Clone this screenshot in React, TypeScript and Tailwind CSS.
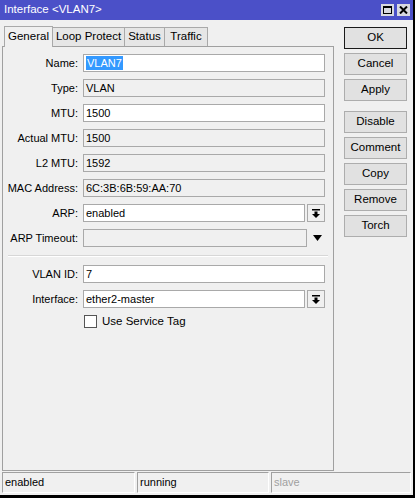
const font = { fontFamily: '"Liberation Sans", Arial, sans-serif' }

function DropIcon() {
  return (
    <svg width="8" height="9" viewBox="0 0 8 9">
      <rect x="0" y="0" width="8" height="1.5" fill="#000" />
      <rect x="2.5" y="2.5" width="3" height="2.5" fill="#000" />
      <path d="M0 5 L8 5 L4 9 Z" fill="#000" />
    </svg>
  )
}

function Row({ label, children }: { label: string; children: React.ReactNode }) {
  return (
    <div className="flex items-center h-[18px]">
      <div className="w-[75px] text-right pr-0 text-black">{label}</div>
      <div className="ml-[5px] flex items-center">{children}</div>
    </div>
  )
}

function Field({ value, editable, w = 242 }: { value: string; editable?: boolean; w?: number }) {
  return (
    <div
      className={`h-[18px] border border-[#a9a9a9] flex items-center pl-[2px] ${editable ? 'bg-white' : 'bg-[#f0f0f0]'}`}
      style={{ width: w }}
    >
      {value}
    </div>
  )
}

export default function App() {
  const buttons1 = ['OK', 'Cancel', 'Apply']
  const buttons2 = ['Disable', 'Comment', 'Copy', 'Remove', 'Torch']

  return (
    <div className="w-[415px] h-[498px] bg-[#f0f0f0] text-[11px] text-black flex flex-col border-r-[2px] border-b-[3px] border-black overflow-hidden" style={font}>
      {/* title bar */}
      <div className="h-[20px] bg-[#4b50c8] flex items-center justify-between pl-[4px] pr-[5px] mr-[-2px] shrink-0">
        <span className="text-white text-[11.5px]">Interface &lt;VLAN7&gt;</span>
        <div className="flex gap-[3px] items-center">
          <div className="w-[13px] h-[12px] bg-[#d8d8e0] flex items-center justify-center">
            <div className="w-[9px] h-[8px] border border-black border-t-2" />
          </div>
          <div className="w-[13px] h-[12px] bg-[#d8d8e0] flex items-center justify-center">
            <svg width="9" height="8" viewBox="0 0 9 8">
              <path d="M1 0.5 L8 7.5 M8 0.5 L1 7.5" stroke="#000" strokeWidth="2" />
            </svg>
          </div>
        </div>
      </div>

      <div className="flex flex-1 min-h-0">
        {/* left: tabs + panel */}
        <div className="ml-[2px] w-[332px] flex flex-col">
          <div className="h-[26px] flex items-end pl-[2px]">
            <div className="h-[21px] w-[49px] border border-b-0 border-[#a9a9a9] bg-[#f0f0f0] flex items-center justify-center text-[11.5px] relative top-[1px]">
              General
            </div>
            <div className="h-[19px] w-[72px] border border-l-0 border-b-0 border-[#a9a9a9] bg-[#e6e6e6] flex items-center justify-center text-[11.5px]">
              Loop Protect
            </div>
            <div className="h-[19px] w-[40px] border border-l-0 border-b-0 border-[#a9a9a9] bg-[#e6e6e6] flex items-center justify-center text-[11.5px]">
              Status
            </div>
            <div className="h-[19px] w-[43px] border border-l-0 border-b-0 border-[#a9a9a9] bg-[#e6e6e6] flex items-center justify-center text-[11.5px]">
              Traffic
            </div>
          </div>
          <div className="h-[425px] border border-[#a0a0a0] flex flex-col pt-[7px] gap-[7px]">
            <Row label="Name:">
              <div className="h-[18px] w-[242px] border border-[#a9a9a9] bg-white flex items-center pl-[2px]">
                <span className="bg-[#3399ff] text-white px-[1px] leading-[14px]">VLAN7</span>
              </div>
            </Row>
            <Row label="Type:"><Field value="VLAN" /></Row>
            <Row label="MTU:"><Field value="1500" editable /></Row>
            <Row label="Actual MTU:"><Field value="1500" /></Row>
            <Row label="L2 MTU:"><Field value="1592" /></Row>
            <Row label="MAC Address:"><Field value="6C:3B:6B:59:AA:70" /></Row>
            <Row label="ARP:">
              <Field value="enabled" editable w={222} />
              <div className="ml-[2px] w-[18px] h-[18px] border border-[#a9a9a9] bg-[#f0f0f0] flex items-center justify-center">
                <DropIcon />
              </div>
            </Row>
            <Row label="ARP Timeout:">
              <Field value="" w={224} />
              <svg className="ml-[6px]" width="9" height="6" viewBox="0 0 9 6">
                <path d="M0 0 L9 0 L4.5 6 Z" fill="#000" />
              </svg>
            </Row>
            <div className="ml-[5px] w-[320px] h-[2px] border-t border-[#d7d7d7] border-b border-b-white my-[1px]" />
            <Row label="VLAN ID:"><Field value="7" editable /></Row>
            <Row label="Interface:">
              <Field value="ether2-master" editable w={222} />
              <div className="ml-[2px] w-[18px] h-[18px] border border-[#a9a9a9] bg-[#f0f0f0] flex items-center justify-center">
                <DropIcon />
              </div>
            </Row>
            <div className="flex items-center ml-[81px] mt-[-2px]">
              <div className="w-[13px] h-[13px] border border-[#555] bg-white" />
              <span className="ml-[5px] text-[11.5px]">Use Service Tag</span>
            </div>
          </div>
        </div>

        {/* right: buttons */}
        <div className="ml-[10px] pt-[7px] flex flex-col w-[63px]">
          <div className="flex flex-col gap-[4px]">
            {buttons1.map((b, i) => (
              <div
                key={b}
                className={`h-[22px] bg-[#e1e1e1] border flex items-center justify-center text-[11.5px] ${i === 0 ? 'border-[#1a1a1a]' : 'border-[#adadad]'}`}
              >
                {b}
              </div>
            ))}
          </div>
          <div className="flex flex-col gap-[4px] mt-[10px]">
            {buttons2.map((b) => (
              <div key={b} className="h-[22px] bg-[#e1e1e1] border border-[#adadad] flex items-center justify-center text-[11.5px]">
                {b}
              </div>
            ))}
          </div>
        </div>
      </div>

      {/* status bar */}
      <div className="h-[24px] flex items-stretch gap-[2px] pl-[2px] pr-[2px] pt-[1px] pb-[2px] shrink-0">
        <div className="w-[133px] border border-t-[#a0a0a0] border-l-[#a0a0a0] border-r-white border-b-white flex items-center pl-[2px]">enabled</div>
        <div className="w-[132px] border border-t-[#a0a0a0] border-l-[#a0a0a0] border-r-white border-b-white flex items-center pl-[2px]">running</div>
        <div className="flex-1 border border-t-[#a0a0a0] border-l-[#a0a0a0] border-r-white border-b-white flex items-center pl-[2px] text-[#a0a0a0]">slave</div>
      </div>
    </div>
  )
}
